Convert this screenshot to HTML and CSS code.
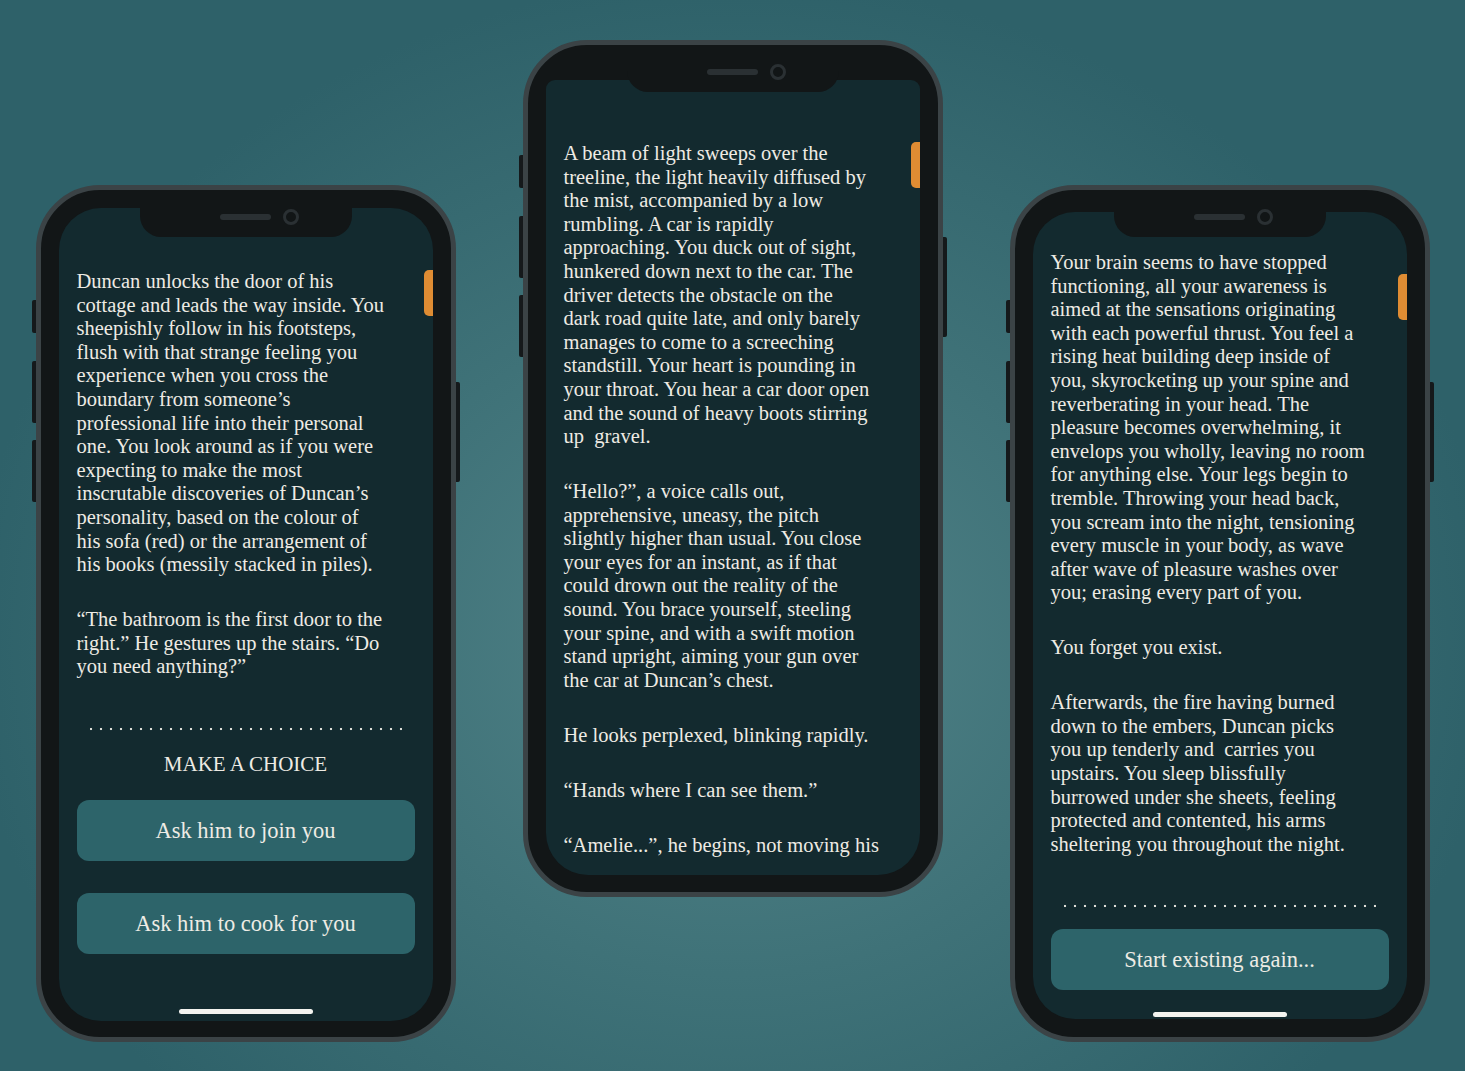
FILE: index.html
```html
<!DOCTYPE html>
<html lang="en">
<head>
<meta charset="utf-8">
<title>Story screens</title>
<link rel="stylesheet" href="styles.css">
</head>
<body>
<main class="stage">

  <section class="phone phone--side">
    <span class="side-btn side-btn--mute"></span>
    <span class="side-btn side-btn--vol-up"></span>
    <span class="side-btn side-btn--vol-down"></span>
    <span class="side-btn side-btn--power"></span>
    <div class="notch"><span class="speaker"></span><span class="camera"></span></div>
    <div class="screen">
      <span class="scrollbar"></span>
      <p>Duncan unlocks the door of his<br>cottage and leads the way inside. You<br>sheepishly follow in his footsteps,<br>flush with that strange feeling you<br>experience when you cross the<br>boundary from someone’s<br>professional life into their personal<br>one. You look around as if you were<br>expecting to make the most<br>inscrutable discoveries of Duncan’s<br>personality, based on the colour of<br>his sofa (red) or the arrangement of<br>his books (messily stacked in piles).</p>
      <p>“The bathroom is the first door to the<br>right.” He gestures up the stairs. “Do<br>you need anything?”</p>
      <div class="dots"></div>
      <h2 class="choice-title">MAKE A CHOICE</h2>
      <div class="choices">
        <button class="btn">Ask him to join you</button>
        <button class="btn">Ask him to cook for you</button>
      </div>
      <span class="home-bar"></span>
    </div>
  </section>

  <section class="phone phone--middle">
    <span class="side-btn side-btn--mute"></span>
    <span class="side-btn side-btn--vol-up"></span>
    <span class="side-btn side-btn--vol-down"></span>
    <span class="side-btn side-btn--power"></span>
    <div class="notch"><span class="speaker"></span><span class="camera"></span></div>
    <div class="screen screen--middle">
      <span class="scrollbar"></span>
      <p>A beam of light sweeps over the<br>treeline, the light heavily diffused by<br>the mist, accompanied by a low<br>rumbling. A car is rapidly<br>approaching. You duck out of sight,<br>hunkered down next to the car. The<br>driver detects the obstacle on the<br>dark road quite late, and only barely<br>manages to come to a screeching<br>standstill. Your heart is pounding in<br>your throat. You hear a car door open<br>and the sound of heavy boots stirring<br>up&nbsp; gravel.</p>
      <p>“Hello?”, a voice calls out,<br>apprehensive, uneasy, the pitch<br>slightly higher than usual. You close<br>your eyes for an instant, as if that<br>could drown out the reality of the<br>sound. You brace yourself, steeling<br>your spine, and with a swift motion<br>stand upright, aiming your gun over<br>the car at Duncan’s chest.</p>
      <p>He looks perplexed, blinking rapidly.</p>
      <p>“Hands where I can see them.”</p>
      <p>“Amelie...”, he begins, not moving his</p>
    </div>
  </section>

  <section class="phone phone--side phone--right">
    <span class="side-btn side-btn--mute"></span>
    <span class="side-btn side-btn--vol-up"></span>
    <span class="side-btn side-btn--vol-down"></span>
    <span class="side-btn side-btn--power"></span>
    <div class="notch"><span class="speaker"></span><span class="camera"></span></div>
    <div class="screen screen--right">
      <span class="scrollbar"></span>
      <p>Your brain seems to have stopped<br>functioning, all your awareness is<br>aimed at the sensations originating<br>with each powerful thrust. You feel a<br>rising heat building deep inside of<br>you, skyrocketing up your spine and<br>reverberating in your head. The<br>pleasure becomes overwhelming, it<br>envelops you wholly, leaving no room<br>for anything else. Your legs begin to<br>tremble. Throwing your head back,<br>you scream into the night, tensioning<br>every muscle in your body, as wave<br>after wave of pleasure washes over<br>you; erasing every part of you.</p>
      <p>You forget you exist.</p>
      <p>Afterwards, the fire having burned<br>down to the embers, Duncan picks<br>you up tenderly and&nbsp; carries you<br>upstairs. You sleep blissfully<br>burrowed under she sheets, feeling<br>protected and contented, his arms<br>sheltering you throughout the night.</p>
      <div class="dots"></div>
      <div class="choices choices--end">
        <button class="btn">Start existing again...</button>
      </div>
      <span class="home-bar home-bar--low"></span>
    </div>
  </section>

</main>
</body>
</html>
```

FILE: styles.css
```css
html, body {
  margin: 0;
  padding: 0;
}

body {
  width: 1465px;
  height: 1071px;
  overflow: hidden;
  background: radial-gradient(ellipse 52% 62% at 50% 60%, #528489 0%, #3f7278 50%, #2e6169 100%);
  font-family: "Liberation Serif", "Times New Roman", serif;
}

.stage {
  display: flex;
  justify-content: center;
  align-items: flex-start;
  gap: 67px;
  padding-top: 40px;
}

.phone {
  position: relative;
  flex: none;
  width: 420px;
  height: 857px;
  box-sizing: border-box;
  border: 5px solid #3b4346;
  border-radius: 64px;
  background: #121617;
  padding: 18px 18px 16px;
  display: flex;
  flex-direction: column;
}

.phone--side {
  margin-top: 145px;
}

.phone--middle {
  padding-bottom: 17px;
}

.phone--right {
  padding-bottom: 18px;
}

.side-btn {
  position: absolute;
  width: 4px;
  background: #15191b;
}

.side-btn--mute,
.side-btn--vol-up,
.side-btn--vol-down {
  left: -9px;
  border-radius: 2px 0 0 2px;
}

.side-btn--mute { top: 110px; height: 33px; }
.side-btn--vol-up { top: 171px; height: 62px; }
.side-btn--vol-down { top: 250px; height: 62px; }

.side-btn--power {
  right: -9px;
  top: 192px;
  height: 100px;
  border-radius: 0 2px 2px 0;
}

.notch {
  position: absolute;
  z-index: 3;
  top: 0;
  left: 99px;
  width: 212px;
  height: 47px;
  background: #121617;
  border-radius: 0 0 21px 21px;
}

.speaker {
  position: absolute;
  left: 80px;
  top: 24px;
  width: 51px;
  height: 6px;
  border-radius: 3px;
  background: #2a3033;
}

.camera {
  position: absolute;
  left: 143px;
  top: 19px;
  width: 10px;
  height: 10px;
  border: 3px solid #2a3033;
  border-radius: 50%;
  background: #111516;
}

.screen {
  position: relative;
  flex: 1;
  background: #132a2f;
  border-radius: 42px;
  overflow: hidden;
  padding: 62px 18px 0;
  color: #eeebe4;
  font-size: 20.5px;
  line-height: 23.6px;
}

.screen--middle {
  margin-top: 17px;
  border-radius: 9px 9px 42px 42px;
}

.screen--right {
  margin-top: 4px;
  padding-top: 39px;
}

.screen p {
  margin: 0 0 31.4px;
  white-space: nowrap;
}

.scrollbar {
  position: absolute;
  top: 62px;
  right: 0;
  width: 9px;
  height: 46px;
  border-radius: 5px 0 0 5px;
  background: #df8c33;
}

.dots {
  height: 4px;
  width: 312px;
  margin: 48px 13px 0;
  background-image: radial-gradient(circle, #dcdcd6 0, #dcdcd6 1px, rgba(220, 220, 214, 0) 1.6px);
  background-size: 10px 4px;
  background-position: -4px 0;
  background-repeat: repeat-x;
}

.choice-title {
  margin: 21px 0 0;
  font-size: 21px;
  line-height: 24px;
  font-weight: normal;
  text-align: center;
  color: #eeebe4;
}

.choices {
  display: flex;
  flex-direction: column;
  gap: 32px;
  margin-top: 24px;
}

.choices--end {
  margin-top: 21px;
}

.btn {
  display: block;
  width: 100%;
  height: 61px;
  border: 0;
  border-radius: 12px;
  background: #2d646a;
  color: #eeece5;
  font-family: "Liberation Serif", "Times New Roman", serif;
  font-size: 22.5px;
  line-height: 61px;
  padding: 0;
  text-align: center;
}

.home-bar {
  position: absolute;
  left: 120px;
  bottom: 7px;
  width: 134px;
  height: 5px;
  border-radius: 3px;
  background: #f3f3ef;
}

.home-bar--low {
  bottom: 2px;
}
```
